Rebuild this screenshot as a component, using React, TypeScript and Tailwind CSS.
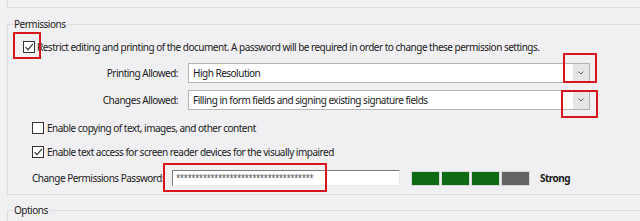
import type { ReactNode } from 'react';

function CheckBox({ checked }: { checked: boolean }) {
  return (
    <span className="w-[12px] h-[12px] shrink-0 border border-[#333333] bg-white flex items-center justify-center">
      {checked && (
        <svg width="10" height="10" viewBox="0 0 10 10">
          <polyline points="1.5,5.2 4,7.7 8.8,2.2" fill="none" stroke="#2b2b2b" strokeWidth="1.1" />
        </svg>
      )}
    </span>
  );
}

function Select({ value }: { value: string }) {
  return (
    <div className="w-[402px] h-[20px] flex border border-[#b4b4b4] bg-white">
      <div className="flex-1 flex items-center pl-[4px] truncate">{value}</div>
      <div className="w-[16px] bg-[#e6e6e6] flex items-center justify-center">
        <svg width="8" height="6" viewBox="0 0 8 6">
          <polyline points="1.5,1.5 4,4 6.5,1.5" fill="none" stroke="#606060" strokeWidth="1" />
        </svg>
      </div>
    </div>
  );
}

function FieldRow({ label, children }: { label: string; children: ReactNode }) {
  return (
    <div className="flex items-center">
      <div className="w-[165px] text-right whitespace-nowrap">{label}</div>
      <div className="ml-[10px]">{children}</div>
    </div>
  );
}

function RedMark({ className }: { className: string }) {
  return <div className={`absolute border-2 border-[#d6141c] ${className}`} />;
}

export default function App() {
  const segments = ['bg-[#0e6b14]', 'bg-[#0e6b14]', 'bg-[#0e6b14]', 'bg-[#646464]'];

  return (
    <div className="relative w-[640px] h-[221px] overflow-hidden bg-[#f0f0f2] text-[#1b1b1b] font-['Noto_Sans',sans-serif] text-[10px] leading-[12px] tracking-[-0.5px]">
      {/* bottom of the previous group */}
      <div className="h-[8px] ml-[7px] border-l border-b border-[#dcdcdc]" />

      <fieldset className="mt-[10px] ml-[7px] w-[700px] border border-[#dcdcdc] px-[5px] pb-[8px]">
        <legend className="px-[1px] leading-[12px]">Permissions</legend>

        <div className="mt-[10px] h-[13px] flex items-center pl-[10px] gap-[2px] whitespace-nowrap">
          <CheckBox checked />
          <span>
            Restrict editing and printing of the document. A password will be required in order to change these
            permission settings.
          </span>
        </div>

        <div className="mt-[10px]">
          <FieldRow label="Printing Allowed:">
            <Select value="High Resolution" />
          </FieldRow>
        </div>

        <div className="mt-[7px]">
          <FieldRow label="Changes Allowed:">
            <Select value="Filling in form fields and signing existing signature fields" />
          </FieldRow>
        </div>

        <div className="mt-[11px] h-[13px] flex items-center pl-[19px] gap-[3px] whitespace-nowrap">
          <CheckBox checked={false} />
          <span>Enable copying of text, images, and other content</span>
        </div>

        <div className="mt-[11px] h-[13px] flex items-center pl-[19px] gap-[3px] whitespace-nowrap">
          <CheckBox checked />
          <span>Enable text access for screen reader devices for the visually impaired</span>
        </div>

        <div className="mt-[12px] flex items-center pl-[19px] whitespace-nowrap">
          <div className="w-[140px]">Change Permissions Password:</div>
          <div className="w-[228px] h-[16px] bg-white border-t border-l border-[#7a7a7a] border-r-[#e8e8e8] border-b-[#e8e8e8] border-r border-b flex items-center pl-[3px] text-[8px] tracking-[-0.6px] text-[#555555] overflow-hidden">
            ************************************
          </div>
          <div className="ml-[11px] flex gap-[1px]">
            {segments.map((bg, i) => (
              <div key={i} className={`w-[29px] h-[15px] border border-[#d8d8d8] ${bg}`} />
            ))}
          </div>
          <div className="ml-[10px] font-bold">Strong</div>
        </div>
      </fieldset>

      <fieldset className="mt-[9px] ml-[7px] w-[700px] h-[40px] border border-[#dcdcdc] px-[5px]">
        <legend className="px-[1px] leading-[12px]">Options</legend>
      </fieldset>

      {/* annotation boxes */}
      <RedMark className="left-[13px] top-[32px] w-[28px] h-[27px]" />
      <RedMark className="left-[563px] top-[53px] w-[34px] h-[30px]" />
      <RedMark className="left-[561px] top-[90px] w-[37px] h-[28px]" />
      <RedMark className="left-[163px] top-[163px] w-[164px] h-[29px]" />
    </div>
  );
}
